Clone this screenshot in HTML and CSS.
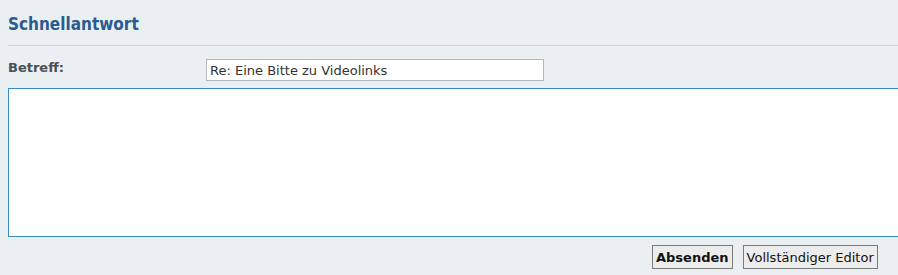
FILE: index.html
```html
<!DOCTYPE html>
<html lang="de">
<head>
<meta charset="utf-8">
<title>Schnellantwort</title>
<link rel="stylesheet" href="styles.css">
</head>
<body>
<div class="page">
  <h2 class="title">Schnellantwort</h2>
  <form class="quick-reply">
    <div class="subject-row">
      <label class="subject-label" for="subject">Betreff:</label>
      <input class="subject-input" id="subject" type="text" value="Re: Eine Bitte zu Videolinks">
    </div>
    <textarea class="message"></textarea>
    <div class="buttons">
      <button type="button" class="btn btn-primary">Absenden</button>
      <button type="button" class="btn">Vollständiger Editor</button>
    </div>
  </form>
</div>
</body>
</html>
```

FILE: styles.css
```css
html, body {
  margin: 0;
  padding: 0;
  background: #eaeff2;
  overflow: hidden;
}
body {
  font-family: "DejaVu Sans", Verdana, sans-serif;
  color: #333;
}
.page {
  padding: 0 0 0 8px;
  width: 1000px;
}
.title {
  margin: 0;
  padding: 14px 0 10px 0;
  font-family: "DejaVu Sans Condensed", "DejaVu Sans", sans-serif;
  font-stretch: condensed;
  font-size: 17px;
  font-weight: bold;
  color: #2b5b8f;
  line-height: 21px;
  border-bottom: 1px solid #cfd4d7;
}
.quick-reply {
  display: flex;
  flex-direction: column;
}
.subject-row {
  display: flex;
  align-items: flex-start;
  padding-top: 13px;
}
.subject-label {
  width: 198px;
  font-size: 13px;
  font-weight: bold;
  color: #4a4f55;
  padding-top: 1px;
}
.subject-input {
  box-sizing: border-box;
  width: 338px;
  height: 22px;
  margin: 0;
  padding: 0 0 0 3px;
  border: 1px solid #b4b8bb;
  background: #fff;
  font-family: "DejaVu Sans", Verdana, sans-serif;
  font-size: 13px;
  color: #333;
}
.message {
  box-sizing: border-box;
  display: block;
  margin-top: 7px;
  width: 1000px;
  height: 149px;
  border: 1px solid #3a8bc8;
  background: #fff;
  resize: none;
}
.buttons {
  display: flex;
  gap: 10px;
  justify-content: flex-start;
  padding: 8px 0 0 644px;
}
.btn {
  box-sizing: border-box;
  height: 24px;
  margin: 0;
  padding: 0 3px;
  border: 1px solid #7a7a7a;
  background: #ececec;
  font-family: "DejaVu Sans", Verdana, sans-serif;
  font-size: 13px;
  color: #111;
}
.btn-primary {
  font-weight: bold;
}
```
